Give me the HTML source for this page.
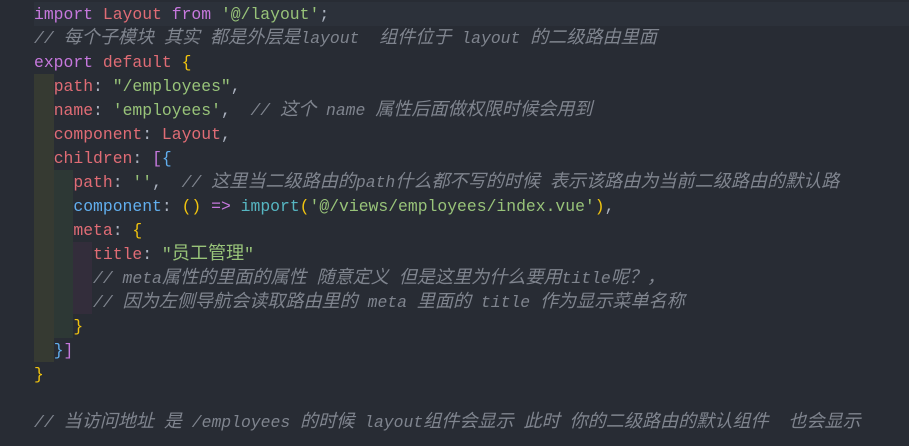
<!DOCTYPE html>
<html><head><meta charset="utf-8"><style>
body{margin:0;width:909px;height:446px;background:#282c34;overflow:hidden;position:relative;
font-family:"Liberation Mono","Noto Sans CJK SC",monospace;font-size:16.4px;}
.l{position:absolute;left:34px;height:24px;line-height:24px;white-space:pre;color:#abb2bf;margin-top:1px}
.g{position:absolute;width:20px}
.c{color:#7f848e;font-style:italic}
.z{font-size:18.1px;line-height:20px}
.k{color:#c678dd}.r{color:#e06c75}.s{color:#98c379}.y{color:#f1c40f}.b{color:#61afef}.t{color:#56b6c2}
</style></head><body>
<div style="position:absolute;left:34px;top:2px;width:875px;height:24px;background:#2c313a"></div>
<div class="g" style="left:34px;top:74px;height:288px;background:#363a32"></div>
<div class="g" style="left:54px;top:170px;height:168px;background:#2d3835;width:19px"></div>
<div class="g" style="left:73px;top:242px;height:72px;background:#332d3b;width:19px"></div>
<div class="l" style="top:2px"><span class="k">import</span> <span class="r">Layout</span> <span class="k">from</span> <span class="s">'@/layout'</span>;</div>
<div class="l c" style="top:26px">// <span class="z">每个子模块</span> <span class="z">其实</span> <span class="z">都是外层是</span>layout  <span class="z">组件位于</span> layout <span class="z">的二级路由里面</span></div>
<div class="l" style="top:50px"><span class="k">export</span> <span class="r">default</span> <span class="y">{</span></div>
<div class="l" style="top:74px">  <span class="r">path</span>: <span class="s">"/employees"</span>,</div>
<div class="l" style="top:98px">  <span class="r">name</span>: <span class="s">'employees'</span>,  <span class="c">// <span class="z">这个</span> name <span class="z">属性后面做权限时候会用到</span></span></div>
<div class="l" style="top:122px">  <span class="r">component</span>: <span class="r">Layout</span>,</div>
<div class="l" style="top:146px">  <span class="r">children</span>: <span style="color:#c678dd">[</span><span class="b">{</span></div>
<div class="l" style="top:170px">    <span class="r">path</span>: <span class="s">''</span>,  <span class="c">// <span class="z">这里当二级路由的</span>path<span class="z">什么都不写的时候</span> <span class="z">表示该路由为当前二级路由的默认路</span></span></div>
<div class="l" style="top:194px">    <span class="b">component</span>: <span class="y">()</span> <span class="k">=&gt;</span> <span class="t">import</span><span class="y">(</span><span class="s">'@/views/employees/index.vue'</span><span class="y">)</span>,</div>
<div class="l" style="top:218px">    <span class="r">meta</span>: <span class="y">{</span></div>
<div class="l" style="top:242px">      <span class="r">title</span>: <span class="s">"<span class="z">员工管理</span>"</span></div>
<div class="l c" style="top:266px">      // meta<span class="z">属性的里面的属性</span> <span class="z">随意定义</span> <span class="z">但是这里为什么要用</span>title<span class="z">呢？，</span></div>
<div class="l c" style="top:290px">      // <span class="z">因为左侧导航会读取路由里的</span> meta <span class="z">里面的</span> title <span class="z">作为显示菜单名称</span></div>
<div class="l" style="top:314px">    <span class="y">}</span></div>
<div class="l" style="top:338px">  <span class="b">}</span><span class="k">]</span></div>
<div class="l" style="top:362px"><span class="y">}</span></div>
<div class="l c" style="top:410px">// <span class="z">当访问地址</span> <span class="z">是</span> /employees <span class="z">的时候</span> layout<span class="z">组件会显示</span> <span class="z">此时</span> <span class="z">你的二级路由的默认组件</span>  <span class="z">也会显示</span></div>
</body></html>
